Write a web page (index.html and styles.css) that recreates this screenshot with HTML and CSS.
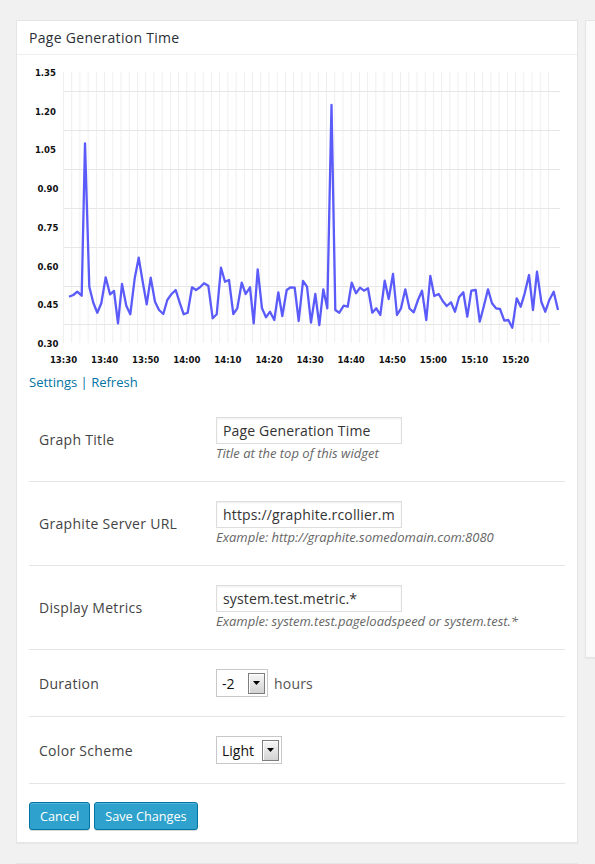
FILE: index.html
```html
<!DOCTYPE html>
<html>
<head>
<meta charset="utf-8">
<title>Page Generation Time</title>
<link rel="stylesheet" href="styles.css">
</head>
<body>
<div class="page">
  <div class="col-main">
    <div class="card card-main">
      <h3 class="card-title">Page Generation Time</h3>
      <svg class="chart" width="560" height="317" viewBox="17 55 560 317" xmlns="http://www.w3.org/2000/svg">
        <defs>
          <pattern id="vg" patternUnits="userSpaceOnUse" x="63" y="72" width="8.22" height="271">
            <rect x="0" y="0" width="1" height="271" fill="#eeeeee"/>
          </pattern>
        </defs>
        <rect x="63" y="72" width="487" height="271" fill="url(#vg)"/>
        <g class="hgrid">
          <line x1="63" x2="560" y1="91.5" y2="91.5"/>
          <line x1="63" x2="560" y1="130.5" y2="130.5"/>
          <line x1="63" x2="560" y1="169.5" y2="169.5"/>
          <line x1="63" x2="560" y1="208.5" y2="208.5"/>
          <line x1="63" x2="560" y1="247.5" y2="247.5"/>
          <line x1="63" x2="560" y1="286.5" y2="286.5"/>
          <line x1="63" x2="560" y1="324.5" y2="324.5"/>
        </g>
        <g class="ylab">
          <text x="56" y="76">1.35</text>
          <text x="56" y="114.7">1.20</text>
          <text x="56" y="153.4">1.05</text>
          <text x="58.5" y="192.1">0.90</text>
          <text x="58.5" y="230.8">0.75</text>
          <text x="58.5" y="269.5">0.60</text>
          <text x="58.5" y="308.2">0.45</text>
          <text x="58.5" y="346.9">0.30</text>
        </g>
        <g class="xlab">
          <text x="63.5" y="363.3">13:30</text>
          <text x="104.6" y="363.3">13:40</text>
          <text x="145.7" y="363.3">13:50</text>
          <text x="186.8" y="363.3">14:00</text>
          <text x="227.9" y="363.3">14:10</text>
          <text x="269" y="363.3">14:20</text>
          <text x="310.1" y="363.3">14:30</text>
          <text x="351.2" y="363.3">14:40</text>
          <text x="392.3" y="363.3">14:50</text>
          <text x="433.4" y="363.3">15:00</text>
          <text x="474.5" y="363.3">15:10</text>
          <text x="515.6" y="363.3">15:20</text>
        </g>
        <polyline class="series" points="69,296.7 73.3,295 77.3,291.7 81.7,295.7 85,143.3 89.3,286.7 93.3,302.7 97.3,312.7 101.3,303.3 105.7,277.3 110,294.3 114,291 118,323.3 122,284 126.3,305.7 130.3,314.3 134.7,278.3 138.7,257.7 142.7,281.7 146.7,304.3 150.7,277.7 155,301.7 159,310 163.3,314 167.3,300 171.3,294.3 175.7,290 179.7,302.7 183.7,314.3 187.7,312.7 192,287.3 196,290 200,287.3 204,283.3 208.3,285.7 212.7,318.3 216.7,314.3 221,267.7 225,281.7 229,280 233.3,314 237.3,308.3 241.7,282.7 245.7,294 250,287.3 253.7,323.3 257.7,269.3 262,308.3 266,317.3 270,311.7 274.3,320 278.3,292.3 282.3,316 286.7,290 290.7,287.3 294.7,287.7 298.7,321 303,281 307,286.7 311,322.7 315.3,294 319.3,325 323.3,289.3 327.3,308.3 331.5,105 335.3,310 339.3,312.7 343.7,305.7 347.7,306.7 351.7,282.7 356,293.3 360,287.7 364,290.7 368,288.3 372.3,312.7 376.3,308.3 380.3,315 384.7,280.7 388.7,299 393,274 397,315 401,308.3 405.3,289.3 409.5,308.5 413.7,312.3 418,300 422,290.7 426.3,320 430.3,276 434.3,296 438.7,294 442.7,301 446.7,306 451,302.3 455,311.7 459,297.3 463.3,292.3 467.3,316.7 471.3,290.7 475.7,290 479.7,321.7 483.7,306.7 488,289.3 492,303.3 496,308.3 500,309 504.3,320.7 508.3,320 512.3,327.7 516.7,298.3 520.7,306.7 524.7,293.3 529,275 533,310 537,271.7 541.3,301.7 545.3,311.7 549.3,300 553.7,291.7 558,310"/>
      </svg>
      <div class="links"><a href="#">Settings</a> <span class="sep">|</span> <a href="#">Refresh</a></div>
      <div class="form">
        <div class="row">
          <label class="label">Graph Title</label>
          <div class="field">
            <input class="text" type="text" value="Page Generation Time">
            <p class="desc">Title at the top of this widget</p>
          </div>
        </div>
        <div class="row">
          <label class="label">Graphite Server URL</label>
          <div class="field">
            <input class="text" type="text" value="https://graphite.rcollier.me:8080">
            <p class="desc">Example: http://graphite.somedomain.com:8080</p>
          </div>
        </div>
        <div class="row">
          <label class="label">Display Metrics</label>
          <div class="field">
            <input class="text" type="text" value="system.test.metric.*">
            <p class="desc">Example: system.test.pageloadspeed or system.test.*</p>
          </div>
        </div>
        <div class="row">
          <label class="label">Duration</label>
          <div class="field field-inline">
            <span class="select select-dur"><span class="select-val">-2</span><span class="select-btn"><svg width="7" height="4" viewBox="0 0 7 4"><polygon points="0,0 7,0 3.5,4" fill="#000"/></svg></span></span>
            <span class="unit">hours</span>
          </div>
        </div>
        <div class="row">
          <label class="label">Color Scheme</label>
          <div class="field field-inline">
            <span class="select select-color"><span class="select-val">Light</span><span class="select-btn"><svg width="7" height="4" viewBox="0 0 7 4"><polygon points="0,0 7,0 3.5,4" fill="#000"/></svg></span></span>
          </div>
        </div>
      </div>
      <div class="actions">
        <button class="btn" type="button">Cancel</button>
        <button class="btn" type="button">Save Changes</button>
      </div>
    </div>
    <div class="card card-next"></div>
  </div>
  <div class="card card-side"></div>
</div>
</body>
</html>
```

FILE: styles.css
```css
html, body {
  margin: 0;
  padding: 0;
}
body {
  background: #f1f1f1;
  font-family: "Open Sans", "Noto Sans", sans-serif;
  color: #444;
  overflow: hidden;
}
.page {
  display: flex;
  gap: 7px;
  padding: 20px 0 0 16px;
  width: 595px;
  height: 864px;
  box-sizing: border-box;
  overflow: hidden;
}
.col-main {
  display: flex;
  flex-direction: column;
  gap: 20px;
  flex: none;
}
.card {
  background: #fff;
  border: 1px solid #e5e5e5;
  box-shadow: 0 1px 1px rgba(0, 0, 0, 0.04);
}
.card-main {
  width: 560px;
}
.card-next {
  width: 560px;
  height: 40px;
}
.card-side {
  flex: none;
  width: 40px;
  height: 636px;
  background: #fafafa;
}
.card-title {
  margin: 0;
  padding: 7px 12px;
  font-size: 14px;
  font-weight: 400;
  line-height: 19px;
  letter-spacing: 0.3px;
  color: #2b3036;
  border-bottom: 1px solid #eeeeee;
}
.chart {
  display: block;
}
.hgrid line {
  stroke: #e6e6e6;
  stroke-width: 1;
}
.ylab text, .xlab text {
  font-family: "DejaVu Sans Condensed", "DejaVu Sans", sans-serif;
  font-stretch: condensed;
  font-weight: bold;
  font-size: 9.5px;
  fill: #111;
}
.ylab text {
  text-anchor: end;
}
.xlab text {
  text-anchor: middle;
}
.series {
  fill: none;
  stroke: #5b5bfa;
  stroke-width: 2.3;
  stroke-linejoin: round;
}
.links {
  padding: 0 12px;
  font-size: 13px;
  line-height: 20px;
  color: #0074a2;
}
.links a {
  color: #0074a2;
  text-decoration: none;
}
.links .sep {
  color: #0074a2;
}
.form {
  margin: 6px 12px 0;
}
.row {
  display: grid;
  grid-template-columns: 187px 1fr;
  padding: 19px 0;
  border-bottom: 1px solid #e5e5e5;
}
.label {
  align-self: center;
  padding-left: 10px;
  font-size: 14px;
  letter-spacing: 0.3px;
  color: #444;
}
.field {
  display: flex;
  flex-direction: column;
  align-items: flex-start;
}
.field-inline {
  flex-direction: row;
  align-items: center;
  gap: 6px;
}
.text {
  display: block;
  box-sizing: border-box;
  width: 186px;
  height: 27px;
  margin: 0;
  padding: 0 6px;
  border: 1px solid #dddddd;
  box-shadow: inset 0 1px 2px rgba(0, 0, 0, 0.07);
  font-family: "Open Sans", "Noto Sans", sans-serif;
  font-size: 14px;
  letter-spacing: 0.15px;
  color: #333;
  background: #fff;
  outline: none;
}
.desc {
  margin: 0;
  font-size: 13px;
  line-height: 18px;
  font-style: italic;
  color: #666;
}
.select {
  display: inline-flex;
  align-items: center;
  justify-content: space-between;
  box-sizing: border-box;
  height: 28px;
  padding: 0 2px 0 5px;
  border: 1px solid #c8c8c8;
  background: #fff;
  font-size: 14px;
  color: #111;
}
.select-dur {
  width: 52px;
}
.select-color {
  width: 66px;
}
.select-btn {
  display: flex;
  align-items: center;
  justify-content: center;
  box-sizing: border-box;
  width: 17px;
  height: 21px;
  border: 1px solid #7d7d7d;
  background: linear-gradient(#f7f7f7, #d2d2d2);
  box-shadow: inset 1px 1px 0 #ffffff;
}
.select-btn svg {
  display: block;
}
.unit {
  font-size: 14px;
  letter-spacing: 0.2px;
  color: #555;
}
.actions {
  display: flex;
  gap: 4px;
  margin-top: 18px;
  padding: 0 12px 12px;
}
.btn {
  height: 28px;
  margin: 0;
  padding: 0 10px 1px;
  border: 1px solid #0074a2;
  border-radius: 3px;
  background: #2ea2cc;
  box-shadow: inset 0 1px 0 rgba(120, 200, 230, 0.5), 0 1px 0 rgba(0, 0, 0, 0.15);
  font-family: "Open Sans", "Noto Sans", sans-serif;
  font-size: 12.7px;
  line-height: 26px;
  color: #fff;
  cursor: pointer;
}
```
